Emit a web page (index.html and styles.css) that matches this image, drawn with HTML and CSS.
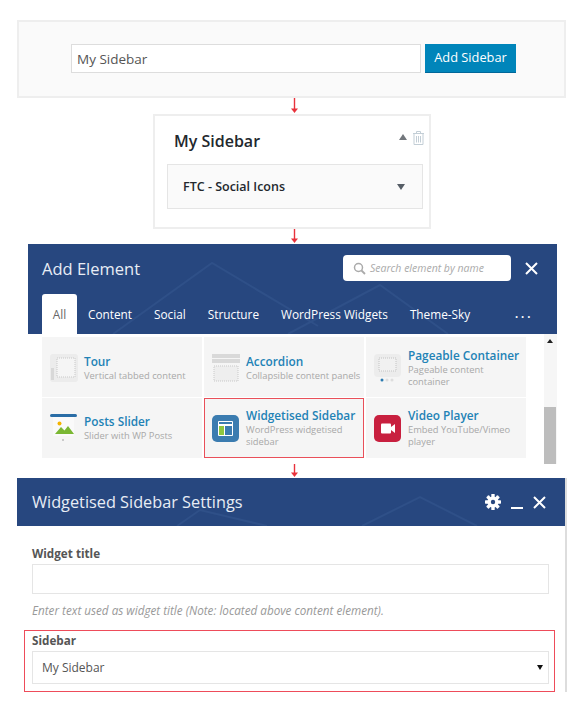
FILE: index.html
```html
<!DOCTYPE html>
<html lang="en">
<head>
    <meta charset="UTF-8">
    <meta name="viewport" content="width=device-width, initial-scale=1.0">
    <title>Widgetised Sidebar</title>
    <link rel="stylesheet" href="styles.css">
</head>
<body>
    <div class="add-panel">
        <div class="add-input">My Sidebar</div>
        <div class="add-btn">Add Sidebar</div>
    </div>

    <svg class="arrow" width="9" height="16" viewBox="0 0 9 16"><path d="M4.5 0V12" stroke="#e8323c" stroke-width="1.4"/><path d="M1 10.500H8L4.500 15Z" fill="#e8323c"/></svg>

    <div class="sidebar-box">
        <div class="sidebar-head">
            <h2 class="sidebar-title">My Sidebar</h2>
            <span class="tri-up"></span>
            <svg class="trash" width="11" height="14" viewBox="0 0 11 14"><path d="M0 2.500H11M3.500 2.500V.5H7.500V2.500M1 2.500V13.500H10V2.500M3.500 5V11.500M5.500 5V11.500M7.500 5V11.500" fill="none" stroke="#c3ced6" stroke-width="1"/></svg>
        </div>
        <div class="widget-row">
            <span>FTC - Social Icons</span>
            <span class="tri-down"></span>
        </div>
    </div>

    <svg class="arrow" width="9" height="15" viewBox="0 0 9 15"><path d="M4.5 0V11" stroke="#e8323c" stroke-width="1.4"/><path d="M1 9.500H8L4.500 14Z" fill="#e8323c"/></svg>

    <div class="add-element">
        <div class="el-head">
            <svg class="head-lines" width="529" height="90" viewBox="0 0 529 90"><path d="M85 90L184 19L290 82M260 90L352 41L420 90" fill="none" stroke="#2f5088" stroke-width="2"/></svg>
            <div class="el-top">
                <span class="el-title">Add Element</span>
                <div class="search">
                    <svg width="13" height="13" viewBox="0 0 13 13"><circle cx="5.500" cy="5.500" r="4" fill="none" stroke="#aaa" stroke-width="1.500"/><path d="M8.500 8.500L12 12" stroke="#aaa" stroke-width="1.800"/></svg>
                    <span>Search element by name</span>
                </div>
                <svg class="close" width="13" height="13" viewBox="0 0 13 13"><path d="M1 1L12 12M12 1L1 12" stroke="#fff" stroke-width="2"/></svg>
            </div>
            <div class="tabs">
                <span class="tab active">All</span>
                <span class="tab">Content</span>
                <span class="tab">Social</span>
                <span class="tab">Structure</span>
                <span class="tab">WordPress Widgets</span>
                <span class="tab">Theme-Sky</span>
                <span class="tab more">...</span>
            </div>
        </div>
        <div class="el-body">
            <div class="el-grid">
                <div class="el-cell first-row">
                    <svg class="el-icon" width="28" height="28" viewBox="0 0 28 28"><rect width="28" height="28" rx="3" fill="#ececec"/><rect x="7" y="4" width="18" height="19" fill="#f5f5f5" stroke="#c9c9c9" stroke-dasharray="1 1"/><rect x="1" y="14" width="3" height="12" fill="#d8d8d8"/></svg>
                    <div><div class="el-name">Tour</div><div class="el-desc">Vertical tabbed content</div></div>
                </div>
                <div class="el-cell first-row">
                    <svg class="el-icon" width="28" height="28" viewBox="0 0 28 28"><rect width="28" height="4" fill="#d9d9d9"/><rect y="5" width="28" height="4" fill="#d9d9d9"/><rect x="2" y="12" width="24" height="15" fill="#eee" stroke="#c9c9c9" stroke-dasharray="1 1"/></svg>
                    <div><div class="el-name">Accordion</div><div class="el-desc">Collapsible content panels</div></div>
                </div>
                <div class="el-cell first-row">
                    <svg class="el-icon" width="28" height="28" viewBox="0 0 28 28"><rect width="27" height="23" rx="4" fill="#ececec"/><rect x="5" y="4" width="17" height="13" fill="#f1f1f1" stroke="#c4c4c4" stroke-dasharray="1 1"/><circle cx="8" cy="26" r="1.500" fill="#2a7ab0"/><circle cx="13" cy="26" r="1.500" fill="#ddd"/><circle cx="18" cy="26" r="1.500" fill="#ddd"/></svg>
                    <div><div class="el-name">Pageable Container</div><div class="el-desc">Pageable content container</div></div>
                </div>
                <div class="el-cell">
                    <svg class="el-icon" width="28" height="28" viewBox="0 0 28 28"><rect width="27" height="3" rx="1.500" fill="#2a6da6"/><rect x="3" y="3" width="21" height="19" fill="#fafafa"/><circle cx="9.500" cy="9.500" r="2" fill="#f4b400"/><path d="M5 20L11 13L14.500 16.500L18 12L24 20Z" fill="#7ab733"/><circle cx="13" cy="26" r="1" fill="#bbb"/></svg>
                    <div><div class="el-name">Posts Slider</div><div class="el-desc">Slider with WP Posts</div></div>
                </div>
                <div class="el-cell picked">
                    <svg class="el-icon" width="28" height="27" viewBox="0 0 28 27"><rect width="27" height="27" rx="5" fill="#3b7cb0"/><rect x="6" y="6" width="15" height="15" rx="1" fill="#fff"/><rect x="7" y="7" width="13" height="2" fill="#3b7cb0"/><rect x="7" y="11" width="5" height="9" fill="#8ec63f"/><rect x="13" y="11" width="7" height="9" fill="#3b7cb0"/></svg>
                    <div><div class="el-name">Widgetised Sidebar</div><div class="el-desc">WordPress widgetised sidebar</div></div>
                </div>
                <div class="el-cell">
                    <svg class="el-icon" width="28" height="27" viewBox="0 0 28 27"><rect width="27" height="27" rx="5" fill="#c8203f"/><rect x="7" y="8.500" width="10" height="10" rx="1" fill="#fff"/><path d="M17 12L21 9V18L17 15Z" fill="#fff"/></svg>
                    <div><div class="el-name">Video Player</div><div class="el-desc">Embed YouTube/Vimeo player</div></div>
                </div>
            </div>
            <div class="scrollbar">
                <span class="scroll-up"></span>
                <div class="scroll-thumb"></div>
            </div>
        </div>
    </div>

    <svg class="arrow" width="9" height="14" viewBox="0 0 9 14"><path d="M4.5 0V10" stroke="#e8323c" stroke-width="1.4"/><path d="M1 8.500H8L4.500 13Z" fill="#e8323c"/></svg>

    <div class="settings">
        <div class="set-head">
            <svg class="head-lines" width="549" height="48" viewBox="0 0 549 48"><path d="M160 48L183 32L250 48M345 48L403 19L460 48" fill="none" stroke="#2f5088" stroke-width="2"/></svg>
            <span class="set-title">Widgetised Sidebar Settings</span>
            <div class="set-icons">
                <svg width="16" height="16" viewBox="0 0 16 16"><g fill="#fff"><rect x="6.300" y="0" width="3.400" height="16" rx=".6"/><rect x="6.300" y="0" width="3.400" height="16" rx=".6" transform="rotate(45 8 8)"/><rect x="6.300" y="0" width="3.400" height="16" rx=".6" transform="rotate(90 8 8)"/><rect x="6.300" y="0" width="3.400" height="16" rx=".6" transform="rotate(135 8 8)"/></g><circle cx="8" cy="8" r="4" fill="none" stroke="#fff" stroke-width="3"/><circle cx="8" cy="8" r="2.200" fill="#27477f"/></svg>
                <span class="minimize"></span>
                <svg width="13" height="13" viewBox="0 0 13 13"><path d="M1 1L12 12M12 1L1 12" stroke="#fff" stroke-width="2"/></svg>
            </div>
        </div>
        <div class="set-body">
            <label class="set-label">Widget title</label>
            <div class="set-input"></div>
            <p class="set-help">Enter text used as widget title (Note: located above content element).</p>
            <div class="set-picked">
                <label class="set-label">Sidebar</label>
                <div class="set-select">
                    <span>My Sidebar</span>
                    <span class="tri-select"></span>
                </div>
            </div>
        </div>
    </div>
</body>
</html>
```

FILE: styles.css
```css
body {
    margin: 0;
    width: 588px;
    height: 716px;
    overflow: hidden;
    background: #fff;
    font-family: "Open Sans", sans-serif;
    color: #444;
}
.arrow {
    display: block;
    margin-left: 290px;
}

/* top panel */
.add-panel {
    box-sizing: border-box;
    display: flex;
    gap: 4px;
    width: 549px;
    height: 78px;
    margin: 20px 0 0 17px;
    padding: 22px 0 0 52px;
    background: #fafafa;
    border: 2px solid #eee;
}
.add-input {
    box-sizing: border-box;
    width: 350px;
    height: 29px;
    padding-left: 5px;
    background: #fff;
    border: 1px solid #ddd;
    font-size: 13.500px;
    line-height: 28px;
    color: #555;
}
.add-btn {
    box-sizing: border-box;
    width: 91px;
    height: 29px;
    background: #0085ba;
    border-bottom: 1px solid #006799;
    color: #fff;
    font-size: 12.800px;
    line-height: 27px;
    text-align: center;
}

/* sidebar box */
.sidebar-box {
    box-sizing: border-box;
    width: 278px;
    height: 115px;
    margin-left: 153px;
    padding: 0 7px 0 12px;
    background: #fff;
    border: 2px solid #eee;
}
.sidebar-head {
    display: flex;
    align-items: flex-start;
    height: 48px;
}
.sidebar-title {
    margin: 13px 0 0 7px;
    font-size: 16px;
    line-height: 24px;
    font-weight: 600;
    color: #23282d;
}
.tri-up {
    margin: 18px 2px 0 auto;
    border: 4px solid transparent;
    border-top: 0;
    border-bottom: 6px solid #72777c;
}
.trash {
    margin: 15px -2px 0 4px;
}
.widget-row {
    box-sizing: border-box;
    display: flex;
    align-items: center;
    justify-content: space-between;
    width: 256px;
    height: 45px;
    padding: 0 17px 0 15px;
    background: #fafafa;
    border: 1px solid #e5e5e5;
    font-size: 12.500px;
    font-weight: 600;
    color: #23282d;
}
.tri-down {
    border: 4px solid transparent;
    border-bottom: 0;
    border-top: 6px solid #555d66;
}

/* add element dialog */
.add-element {
    width: 529px;
    margin-left: 28px;
}
.el-head {
    position: relative;
    box-sizing: border-box;
    height: 90px;
    padding: 0 14px;
    background: #27477f;
    overflow: hidden;
}
.head-lines {
    position: absolute;
    left: 0;
    top: 0;
}
.el-top {
    position: relative;
    display: flex;
    align-items: center;
    height: 48px;
}
.el-title {
    font-size: 16.500px;
    color: #e8edf5;
}
.search {
    box-sizing: border-box;
    display: flex;
    align-items: center;
    gap: 4px;
    width: 168px;
    height: 26px;
    margin-left: auto;
    padding-left: 10px;
    background: #fff;
    border-radius: 4px;
    font-size: 10.500px;
    font-style: italic;
    color: #aaa;
}
.close {
    margin: 0 5px 0 14px;
}
.tabs {
    position: relative;
    display: flex;
    height: 40px;
    margin-top: 2px;
    color: #fff;
    font-size: 11.800px;
}
.tab {
    padding: 0 11px;
    line-height: 40px;
}
.tab.active {
    box-sizing: border-box;
    width: 35px;
    padding: 0;
    text-align: center;
    background: #fff;
    border-radius: 3px 3px 0 0;
    color: #666;
}
.tab.more {
    margin-left: auto;
    padding: 0 10px 0 0;
    font-size: 16px;
    letter-spacing: 2px;
    line-height: 36px;
}
.el-body {
    display: flex;
    height: 130px;
    overflow: hidden;
}
.el-grid {
    display: grid;
    grid-template-columns: 160px 160px 160px;
    grid-template-rows: 60px 60px 20px;
    gap: 1px 2px;
    width: 486px;
    margin: 3px 0 0 14px;
}
.el-cell {
    position: relative;
    box-sizing: border-box;
    display: flex;
    align-items: center;
    gap: 6px;
    padding-left: 8px;
    background: #f5f5f5;
    font-size: 10px;
}
.el-cell.first-row {
    padding-top: 2px;
}
.el-cell.picked::after {
    content: "";
    position: absolute;
    left: 0;
    top: 0;
    right: 0;
    height: 58px;
    border: 1px solid #e9505a;
}
.el-icon {
    flex: none;
}
.el-name {
    font-size: 11.800px;
    font-weight: 600;
    line-height: 15px;
    color: #2282b5;
}
.el-desc {
    margin-top: 1px;
    font-size: 9.350px;
    line-height: 12px;
    color: #a8a8a8;
}
.scrollbar {
    position: relative;
    width: 13px;
    margin-left: 17px;
    background: #f6f6f6;
}
.scroll-up {
    position: absolute;
    left: 3px;
    top: 5px;
    border: 3px solid transparent;
    border-top: 0;
    border-bottom: 4px solid #222;
}
.scroll-thumb {
    width: 12px;
    height: 58px;
    margin-top: 73px;
    background: #bdbdbd;
}

/* settings dialog */
.settings {
    width: 550px;
    height: 214px;
    margin-left: 17px;
    border-right: 2px solid #ddd;
    box-sizing: border-box;
}
.set-head {
    position: relative;
    display: flex;
    align-items: center;
    justify-content: space-between;
    height: 48px;
    padding: 0 19px 0 15px;
    background: #27477f;
    overflow: hidden;
}
.set-title {
    position: relative;
    font-size: 16.300px;
    color: #e8edf5;
}
.set-icons {
    position: relative;
    display: flex;
    align-items: center;
    gap: 10px;
}
.minimize {
    width: 12px;
    height: 2px;
    margin-top: 11px;
    background: #fff;
}
.set-body {
    padding: 19px 16px 0 15px;
}
.set-label {
    display: block;
    font-size: 11.700px;
    line-height: 16px;
    font-weight: 700;
    color: #555;
}
.set-input {
    box-sizing: border-box;
    height: 30px;
    margin-top: 3px;
    background: #fff;
    border: 1px solid #e5e5e5;
}
.set-help {
    margin: 8px 0 0;
    font-size: 11.700px;
    line-height: 16px;
    font-style: italic;
    color: #999;
}
.set-picked {
    box-sizing: border-box;
    width: 531px;
    height: 62px;
    margin: 12px 0 0 -8px;
    padding: 1px 5px 0 7px;
    border: 1px solid #ee4c5a;
}
.set-select {
    box-sizing: border-box;
    display: flex;
    align-items: center;
    justify-content: space-between;
    height: 33px;
    margin-top: 3px;
    padding: 0 5px 0 9px;
    background: #fff;
    border: 1px solid #e5e5e5;
    font-size: 12px;
    color: #555;
}
.tri-select {
    border: 3px solid transparent;
    border-bottom: 0;
    border-top: 5px solid #111;
}
```
